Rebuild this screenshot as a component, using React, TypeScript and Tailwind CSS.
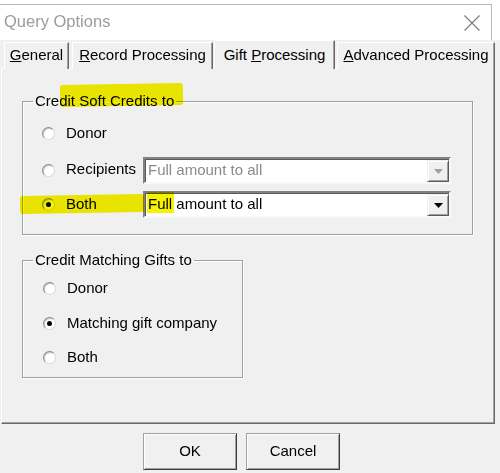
import type { ReactNode } from "react";

const font = "font-['Liberation_Sans',Arial,sans-serif]";

function Radio({ checked }: { checked?: boolean }) {
  return (
    <span className="w-[13px] h-[13px] shrink-0 rounded-full bg-white border border-t-[#8a8a8a] border-l-[#8a8a8a] border-r-[#d8d8d8] border-b-[#d8d8d8] shadow-[inset_1px_1px_0_#c8c8c8] flex items-center justify-center">
      {checked && <span className="w-[5px] h-[5px] rounded-full bg-black" />}
    </span>
  );
}

function Combo({ disabled }: { disabled?: boolean }) {
  return (
    <div className="w-[308px] h-[27px] flex bg-white border-2 border-t-[#828282] border-l-[#828282] border-r-[#f8f8f8] border-b-[#f8f8f8] shadow-[inset_1px_1px_0_#5a5a5a]">
      <div className={`flex-1 flex items-center pl-[3px] ${disabled ? "text-[#8a8a8a]" : "text-black"}`}>
        Full amount to all
      </div>
      <div className="w-[22px] mt-[1px] bg-[#f0f0f0] border border-t-[#f0f0f0] border-l-[#f0f0f0] border-r-[#5a5a5a] border-b-[#5a5a5a] shadow-[inset_1px_1px_0_#fff,inset_-1px_-1px_0_#a0a0a0] flex items-center justify-center">
        <svg width="9" height="5" viewBox="0 0 9 5">
          <path d="M0 0 H9 L4.5 5 Z" fill={disabled ? "#a0a0a0" : "#000"} />
        </svg>
      </div>
    </div>
  );
}

function Group({ title, className, inner, children }: { title: string; className: string; inner: string; children: ReactNode }) {
  return (
    <fieldset className={`border border-[#a0a0a0] shadow-[inset_1px_1px_0_#fff,1px_1px_0_#fff] ${className}`}>
      <legend className="ml-[10px] px-[2px] leading-[18px]">{title}</legend>
      <div className={inner}>{children}</div>
    </fieldset>
  );
}

function Tab({ children, w, ml, selected }: { children: ReactNode; w: string; ml: string; selected?: boolean }) {
  return (
    <div
      className={`${w} ${ml} flex items-center justify-center bg-[#f0f0f0] border-t border-l border-t-white border-l-white border-r border-r-[#696969] shadow-[inset_-1px_0_0_#a0a0a0] ${
        selected ? "h-[29px] relative z-10" : "h-[27px] pb-[1px]"
      }`}
    >
      {children}
    </div>
  );
}

export default function App() {
  return (
    <div className={`relative w-[500px] h-[473px] bg-[#f0f0f0] overflow-hidden text-[15px] text-black ${font}`}>
      {/* title bar */}
      <div className="h-[40px] bg-white pt-[4px]">
        <div className="w-[492px] h-[36px] border-t border-r border-[#b9b9b9] flex items-center justify-between pl-[4px] pr-[10px]">
          <span className="text-[16.5px] text-[#9c9c9c] mt-[-3px]">Query Options</span>
          <svg width="16" height="16" viewBox="0 0 16 16" className="mr-[1px]">
            <path d="M0.5 0.5 L15.5 15.5 M15.5 0.5 L0.5 15.5" stroke="#7a7a7a" strokeWidth="1.1" />
          </svg>
        </div>
      </div>

      {/* tabs */}
      <div className="flex items-end h-[29px] pl-[4px] mb-[-1px]">
        <Tab w="w-[65px]" ml="ml-0"><span><u>G</u>eneral</span></Tab>
        <Tab w="w-[141px]" ml="ml-[3px]"><span><u>R</u>ecord Processing</span></Tab>
        <Tab w="w-[121px]" ml="ml-[1px]" selected><span>Gift <u>P</u>rocessing</span></Tab>
        <Tab w="w-[158px]" ml="ml-[2px]"><span><u>A</u>dvanced Processing</span></Tab>
      </div>

      {/* panel */}
      <div className="ml-[1px] w-[494px] h-[356px] border-t border-l border-t-white border-l-white border-r border-b border-r-[#696969] border-b-[#696969] shadow-[inset_-1px_-1px_0_#a0a0a0] pt-[23px] pl-[20px]">
        <Group title="Credit Soft Credits to" className="w-[451px]" inner="pl-[19px] pb-[16px]">
          <div className="flex items-center h-[26px] mt-[10px]">
            <Radio />
            <span className="ml-[11px]">Donor</span>
          </div>
          <div className="flex items-center h-[27px] mt-[11px]">
            <Radio />
            <span className="ml-[11px] w-[77px] mt-[-3px]">Recipients</span>
            <Combo disabled />
          </div>
          <div className="flex items-center h-[27px] mt-[7px]">
            <Radio checked />
            <span className="ml-[11px] w-[77px] mt-[-1px]">Both</span>
            <Combo />
          </div>
        </Group>

        <Group title="Credit Matching Gifts to" className="w-[221px] mt-[16px]" inner="pl-[20px] pb-[10px]">
          <div className="flex items-center h-[20px] mt-[9px]">
            <Radio />
            <span className="ml-[11px]">Donor</span>
          </div>
          <div className="flex items-center h-[20px] mt-[15px]">
            <Radio checked />
            <span className="ml-[11px]">Matching gift company</span>
          </div>
          <div className="flex items-center h-[20px] mt-[14px]">
            <Radio />
            <span className="ml-[11px]">Both</span>
          </div>
        </Group>
      </div>

      {/* buttons */}
      <div className="flex pl-[143px] pt-[9px] gap-[9px]">
        {["OK", "Cancel"].map((b) => (
          <button
            key={b}
            className="w-[94px] h-[37px] bg-[#f0f0f0] border border-t-[#a0a0a0] border-l-[#a0a0a0] border-r-[#3c3c3c] border-b-[#3c3c3c] shadow-[inset_1px_1px_0_#fff,inset_-1px_-1px_0_#a0a0a0] flex items-center justify-center"
          >
            {b}
          </button>
        ))}
      </div>

      {/* marker highlights drawn over the screenshot */}
      <div className="absolute left-[60px] top-[84px] w-[123px] h-[22px] bg-[#f7f200] mix-blend-multiply rounded-[3px] -rotate-[1deg]" />
      <div className="absolute left-[20px] top-[195px] w-[124px] h-[18px] bg-[#f7f200] mix-blend-multiply rounded-[3px] -rotate-[1deg]" />
      <div className="absolute left-[147px] top-[192px] w-[27px] h-[21px] bg-[#f7f200] mix-blend-multiply" />
    </div>
  );
}
